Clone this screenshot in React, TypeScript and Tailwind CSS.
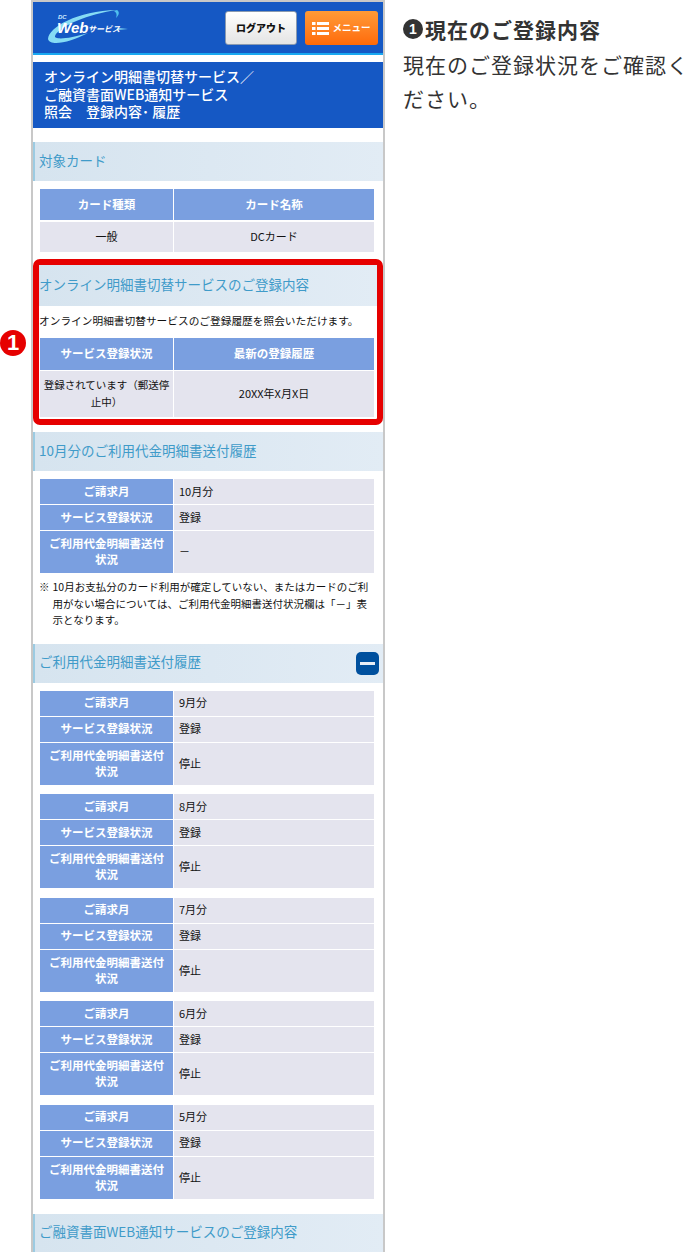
const SectionHead = ({ children, accent = true, action, tall }: { children: React.ReactNode; accent?: boolean; action?: boolean; tall?: boolean }) => (
  <div className={`relative flex items-center bg-gradient-to-r from-[#d6e4ef] to-[#e2ecf5] pb-[3px] text-[13.5px] text-[#3f9bc9] ${tall ? 'h-[41px]' : 'h-[39px]'} ${accent ? 'border-l-2 border-[#9ccbe2] pl-[4px]' : ''}`}>
    {children}
    {action && (
      <div className="absolute right-[4px] top-[8px] flex h-[23px] w-[23px] items-center justify-center rounded-[5px] bg-[#00509e]">
        <div className="h-[3px] w-[15px] bg-[#e8eef6]" />
      </div>
    )}
  </div>
);

const Th = ({ children, h }: { children: React.ReactNode; h: string }) => (
  <div className={`flex ${h} items-center justify-center bg-[#7a9fe0] px-1 pb-[2px] text-center text-[11.5px] leading-[16px] font-bold text-white`}>{children}</div>
);

const Td = ({ children, h, center }: { children: React.ReactNode; h: string; center?: boolean }) => (
  <div className={`flex ${h} items-center bg-[#e4e4ee] pb-[2px] text-[11px] leading-[16px] text-[#111] ${center ? 'justify-center px-0 text-center' : 'px-[5px]'}`}>{children}</div>
);

const HistoryTable = ({ month, status, sent }: { month: string; status: string; sent: string }) => (
  <div className="ml-[7px] grid w-[334px] grid-cols-[133px_200px] gap-px">
    <Th h="h-[25px]">ご請求月</Th>
    <Td h="h-[25px]">{month}</Td>
    <Th h="h-[25px]">サービス登録状況</Th>
    <Td h="h-[25px]">{status}</Td>
    <Th h="h-[42px]">ご利用代金明細書送付<br />状況</Th>
    <Td h="h-[42px]">{sent}</Td>
  </div>
);

const Logo = () => (
  <svg width="84" height="40" viewBox="0 0 84 40" className="ml-[14px] mt-[5px]">
    <path d="M1 32 C2 20 30 4 70 3 C42 7 12 19 8 29 C7 33 22 32 41 26 C24 35 3 40 1 32 Z" fill="#86dcf4" />
    <path d="M70 3 C73 5 72 8 69 11 C70 8 70 6 67 4 Z" fill="#4fc0ee" />
    <path d="M71 21 L81 22 L70 23 Z" fill="#86dcf4" />
    <text x="11" y="12" fontSize="6" fontStyle="italic" fontWeight="700" fill="#cfeaff" fontFamily="Liberation Sans, sans-serif">DC</text>
    <text x="10" y="26" fontSize="15" fontStyle="italic" fontWeight="700" fill="#fff" fontFamily="Liberation Sans, sans-serif">Web</text>
    <text x="41" y="25" fontSize="8" fontStyle="italic" fontWeight="700" fill="#fff" fontFamily="'Noto Sans CJK JP', sans-serif">サービス</text>
  </svg>
);

const histories = ['9月分', '8月分', '7月分', '6月分', '5月分'];

export default function App() {
  return (
    <div className="relative flex h-[1252px] w-[690px] overflow-hidden bg-white font-['Noto_Sans_CJK_JP',sans-serif]">
      <div className="ml-[31px] h-[1252px] w-[354px] shrink-0 border-x-2 border-y-2 border-[#c8c8c8] bg-white">
        <div className="flex h-[53px] items-start justify-between border-b-2 border-[#19a8f0] bg-[#1558c4]">
          <Logo />
          <div className="mr-[5px] mt-[9px] flex gap-[8px]">
            <div className="flex h-[34px] w-[72px] items-center justify-center rounded-[3px] border border-[#8a9ab0] bg-gradient-to-b from-white to-[#e4e4e4] pb-[2px] text-[10px] font-black text-[#111]">ログアウト</div>
            <div className="flex h-[34px] w-[73px] items-center justify-center gap-[3px] rounded-[3px] bg-gradient-to-b from-[#ff9a35] to-[#ff6a05] text-[9.5px] font-bold text-white">
              <svg width="17" height="13" viewBox="0 0 17 13" fill="#fff">
                <rect x="0" y="0" width="3.5" height="3" />
                <rect x="5" y="0" width="12" height="3" />
                <rect x="0" y="5" width="3.5" height="3" />
                <rect x="5" y="5" width="12" height="3" />
                <rect x="0" y="10" width="3.5" height="3" />
                <rect x="5" y="10" width="12" height="3" />
              </svg>
              <span className="pb-[2px]">メニュー</span>
            </div>
          </div>
        </div>

        <div className="mt-[7px] h-[66px] bg-[#1558c4] pl-[11px] pt-[6px] text-[14px] leading-[17.5px] font-medium text-white">
          オンライン明細書切替サービス／<br />
          ご融資書面WEB通知サービス<br />
          照会　登録内容･ 履歴
        </div>

        <div className="mt-[14px]">
          <SectionHead>対象カード</SectionHead>
        </div>
        <div className="ml-[7px] mt-[8px] grid w-[334px] grid-cols-[133px_200px] gap-x-px gap-y-[2px]">
          <Th h="h-[31px]">カード種類</Th>
          <Th h="h-[31px]">カード名称</Th>
          <Td h="h-[30px]" center>一般</Td>
          <Td h="h-[30px]" center>DCカード</Td>
        </div>

        <div className="mt-[7px] h-[166px] rounded-[7px] border-[6px] border-[#e60000] bg-white">
          <SectionHead accent={false} tall>オンライン明細書切替サービスのご登録内容</SectionHead>
          <div className="flex h-[32px] items-center pb-[2px] text-[10.7px] whitespace-nowrap text-[#111]">オンライン明細書切替サービスのご登録履歴を照会いただけます。</div>
          <div className="ml-[1px] grid w-[334px] grid-cols-[133px_200px] gap-x-px gap-y-[1px]">
            <Th h="h-[32px]">サービス登録状況</Th>
            <Th h="h-[32px]">最新の登録履歴</Th>
            <Td h="h-[46px]" center><span className="text-[10.5px] leading-[17px]">登録されています（郵送停<br />止中）</span></Td>
            <Td h="h-[46px]" center>20XX年X月X日</Td>
          </div>
        </div>

        <div className="mt-[7px]">
          <SectionHead>10月分のご利用代金明細書送付履歴</SectionHead>
        </div>
        <div className="mt-[8px]">
          <HistoryTable month="10月分" status="登録" sent="－" />
        </div>
        <div className="ml-[6px] mt-[6px] flex w-[338px] text-[10.5px] leading-[16.5px] text-[#111]">
          <span className="w-[13.5px] shrink-0">※</span>
          <span>10月お支払分のカード利用が確定していない、またはカードのご利用がない場合については、ご利用代金明細書送付状況欄は「－」表示となります。</span>
        </div>

        <div className="mt-[15px]">
          <SectionHead action>ご利用代金明細書送付履歴</SectionHead>
        </div>
        <div className="mt-[8px] flex flex-col gap-[9.5px]">
          {histories.map((m) => (
            <div key={m}>
              <HistoryTable month={m} status="登録" sent="停止" />
            </div>
          ))}
        </div>

        <div className="mt-[15px]">
          <SectionHead>ご融資書面WEB通知サービスのご登録内容</SectionHead>
        </div>
      </div>

      <div className="absolute left-[0px] top-[330px] flex h-[26px] w-[26px] items-center justify-center rounded-full bg-[#e60000] pb-[1px] font-['Liberation_Sans',sans-serif] text-[22px] font-bold text-white">1</div>

      <div className="ml-[18px] mt-[12px] w-[287px] text-[21px] leading-[34.5px] tracking-[1px] text-[#333]">
        <div className="flex items-center font-bold">
          <span className="mr-[2px] flex h-[20px] w-[20px] items-center justify-center rounded-full bg-[#333] font-['Liberation_Sans',sans-serif] text-[14px] tracking-normal text-white">1</span>
          現在のご登録内容
        </div>
        <div>現在のご登録状況をご確認ください。</div>
      </div>
    </div>
  );
}
